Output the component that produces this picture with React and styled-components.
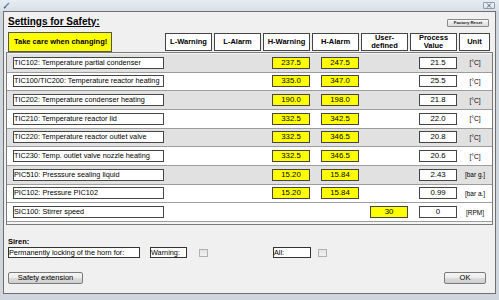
import React from "react";
import styled, { createGlobalStyle } from "styled-components";

const GlobalStyle = createGlobalStyle`
  html, body { margin: 0; padding: 0; background: #d3d9e0; }
  body { font-family: "Liberation Sans", Arial, sans-serif; }
  * { box-sizing: border-box; }
`;

const Window = styled.div`
  width: 499px;
  height: 300px;
  display: flex;
  flex-direction: column;
  background: #d0d6dd;
  padding: 0 3px 6px 3px;
`;

const TitleBar = styled.div`
  height: 11px;
  margin: 0 -3px;
  padding: 0 4px 0 3px;
  display: flex;
  align-items: center;
  justify-content: space-between;
  background: linear-gradient(#e6ecf2, #d8e0e8);
`;

const CloseBtn = styled.div`
  width: 12px;
  height: 7px;
  border: 1px solid #8d9cad;
  border-radius: 1px;
  background: linear-gradient(#f3f6f9, #dde3ea);
  display: flex;
  align-items: center;
  justify-content: center;
`;

const Content = styled.div`
  flex: 1;
  display: flex;
  flex-direction: column;
  background: #f0f0f0;
  border: 1px solid #6e6e6e;
  padding: 0 1px;
`;

const TopRow = styled.div`
  height: 19px;
  display: flex;
  align-items: center;
  justify-content: space-between;
  padding: 0 5px 0 3px;
`;

const Heading = styled.div`
  font-size: 10px;
  line-height: 12px;
  font-weight: bold;
  text-decoration: underline;
  color: #000;
`;

const TinyButton = styled.div`
  width: 42px;
  height: 8px;
  margin-top: 2px;
  border: 1px solid #8a8a8a;
  border-radius: 1px;
  background: linear-gradient(#f7f7f7, #dadada);
  font-size: 4.3px;
  font-weight: bold;
  line-height: 6px;
  text-align: center;
  color: #222;
`;

const Columns = `157px repeat(6, 49px) 31px`;

const HeaderRow = styled.div`
  height: 21px;
  display: grid;
  grid-template-columns: ${Columns};
  align-items: center;
  padding-left: 3px;
`;

const Warning = styled.div`
  width: 104px;
  height: 20px;
  background: #ffff00;
  border: 1px solid #555;
  font-size: 7.5px;
  font-weight: bold;
  display: flex;
  align-items: center;
  padding-left: 5px;
  color: #000;
`;

const HeadCell = styled.div`
  width: ${(p) => p.$w || 47}px;
  height: 18px;
  background: #fff;
  border: 1px solid #444;
  font-size: 7.5px;
  font-weight: bold;
  line-height: 8px;
  display: flex;
  align-items: center;
  justify-content: center;
  text-align: center;
  color: #000;
`;

const Table = styled.div`
  margin: 0 1px;
  height: 173px;
  border: 1px solid #7a7a7a;
  background: #f4f4f4;
  padding-top: 1px;
  display: grid;
  grid-template-rows: repeat(9, calc(168px / 9));
  align-content: start;
`;

const Row = styled.div`
  display: grid;
  grid-template-columns: 152px repeat(6, 49px) 31px;
  align-items: center;
  padding-left: 6px;
  background: ${(p) => (p.$shade ? "#e1e1e1" : "#ffffff")};
  border-bottom: 1px solid #9c9c9c;
`;

const LabelBox = styled.div`
  width: 151px;
  height: 12px;
  background: #fff;
  border: 1px solid #454545;
  font-size: 7.3px;
  line-height: 10px;
  white-space: nowrap;
  overflow: hidden;
  color: #000;
`;

const ValueBox = styled.div`
  justify-self: end;
  margin-right: 2px;
  width: 38px;
  height: 12px;
  background: ${(p) => (p.$yellow ? "#ffff00" : "#ffffff")};
  border: 1px solid #454545;
  font-size: 7.8px;
  line-height: 10px;
  text-align: center;
  color: #000;
`;

const Unit = styled.div`
  font-size: 6.5px;
  text-align: center;
  color: #000;
  padding-left: 1px;
`;

const Siren = styled.div`
  margin-top: 12px;
  padding-left: 3px;
  font-size: 7.5px;
  font-weight: bold;
  line-height: 10px;
  color: #000;
`;

const InputRow = styled.div`
  display: flex;
  align-items: center;
  height: 11px;
  padding-left: 3px;
`;

const TextBox = styled.div`
  width: ${(p) => p.$w}px;
  margin-left: ${(p) => p.$ml || 0}px;
  height: 11px;
  background: #fff;
  border: 1px solid #333;
  font-size: 7.3px;
  line-height: 9px;
  white-space: nowrap;
  color: #000;
`;

const Check = styled.div`
  width: 9px;
  height: 8px;
  margin-left: ${(p) => p.$ml || 0}px;
  border: 1px solid #b0b0b0;
  background: linear-gradient(#e4e4e4, #f2f2f2);
`;

const ButtonRow = styled.div`
  margin-top: 14px;
  display: flex;
  justify-content: space-between;
  padding: 0 8px 0 3px;
`;

const Button = styled.div`
  width: ${(p) => p.$w}px;
  height: 12px;
  border: 1px solid #7a7a7a;
  border-radius: 2px;
  background: linear-gradient(#f5f5f5 0%, #ebebeb 50%, #dcdcdc 51%, #cfcfcf 100%);
  font-size: 7.5px;
  line-height: 10px;
  text-align: center;
  color: #000;
`;

const rows = [
  ["TIC102: Temperature partial condenser", "237.5", "247.5", "", "21.5", "[°C]"],
  ["TIC100/TIC200: Temperature reactor heating", "335.0", "347.0", "", "25.5", "[°C]"],
  ["TIC202: Temperature condenser heating", "190.0", "198.0", "", "21.8", "[°C]"],
  ["TIC210: Temperature reactor lid", "332.5", "342.5", "", "22.0", "[°C]"],
  ["TIC220: Temperature reactor outlet valve", "332.5", "346.5", "", "20.8", "[°C]"],
  ["TIC230: Temp. outlet valve nozzle heating", "332.5", "346.5", "", "20.6", "[°C]"],
  ["PIC510: Presssure sealing liquid", "15.20", "15.84", "", "2.43", "[bar g.]"],
  ["PIC102: Pressure PIC102", "15.20", "15.84", "", "0.99", "[bar a.]"],
  ["SIC100: Stirrer speed", "", "", "30", "0", "[RPM]"],
];

const Empty = styled.div``;

export default function App() {
  return (
    <>
      <GlobalStyle />
      <Window>
        <TitleBar>
          <svg width="7" height="7" viewBox="0 0 7 7">
            <path d="M1 6 L6 1" stroke="#5a7fb0" strokeWidth="1.2" />
            <path d="M1 6 L2.5 5.5" stroke="#2c4f80" strokeWidth="1" />
          </svg>
          <CloseBtn>
            <svg width="6" height="5" viewBox="0 0 6 5">
              <path d="M1 0.5 L5 4.5 M5 0.5 L1 4.5" stroke="#4a5563" strokeWidth="0.9" />
            </svg>
          </CloseBtn>
        </TitleBar>
        <Content>
          <TopRow>
            <Heading>Settings for Safety:</Heading>
            <TinyButton>Factory Reset</TinyButton>
          </TopRow>
          <HeaderRow>
            <Warning>Take care when changing!</Warning>
            <HeadCell>L-Warning</HeadCell>
            <HeadCell>L-Alarm</HeadCell>
            <HeadCell>H-Warning</HeadCell>
            <HeadCell>H-Alarm</HeadCell>
            <HeadCell>
              User-
              <br />
              defined
            </HeadCell>
            <HeadCell>
              Process
              <br />
              Value
            </HeadCell>
            <HeadCell $w={31}>Unit</HeadCell>
          </HeaderRow>
          <Table>
            {rows.map(([label, hw, ha, ud, pv, unit], i) => (
              <Row key={i} $shade={i % 2 === 0 && i < 8}>
                <LabelBox>{label}</LabelBox>
                <Empty />
                <Empty />
                {hw ? <ValueBox $yellow>{hw}</ValueBox> : <Empty />}
                {ha ? <ValueBox $yellow>{ha}</ValueBox> : <Empty />}
                {ud ? <ValueBox $yellow>{ud}</ValueBox> : <Empty />}
                <ValueBox>{pv}</ValueBox>
                <Unit>{unit}</Unit>
              </Row>
            ))}
          </Table>
          <Siren>Siren:</Siren>
          <InputRow>
            <TextBox $w={132}>Permanently locking of the horn for:</TextBox>
            <TextBox $w={37} $ml={10}>Warning:</TextBox>
            <Check $ml={12} />
            <TextBox $w={38} $ml={65}>All:</TextBox>
            <Check $ml={7} />
          </InputRow>
          <ButtonRow>
            <Button $w={75}>Safety extension</Button>
            <Button $w={42}>OK</Button>
          </ButtonRow>
        </Content>
      </Window>
    </>
  );
}
